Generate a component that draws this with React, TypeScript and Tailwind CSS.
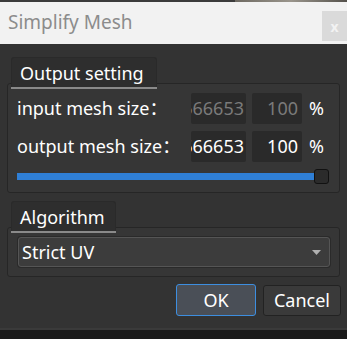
import React from 'react';

const font = { fontFamily: '"Segoe UI", "Noto Sans", "Noto Sans CJK SC", "Open Sans", sans-serif' };

function Tab({ label, width }: { label: string; width: string }) {
  return (
    <div
      className={`relative z-10 ml-[4px] h-[32px] ${width} rounded-t-[3px] border border-b-0 border-[#2a2a2a] bg-[#2e2e2e] flex flex-col`}
    >
      <div className="flex-1 flex items-center pl-[8px] text-[18px] leading-none text-white">{label}</div>
      <div className="h-[2px] bg-[#8a8a8a] -mx-px" />
    </div>
  );
}

function SizeRow({ label, count, pct, disabled }: { label: string; count: string; pct: string; disabled?: boolean }) {
  const tone = disabled ? 'text-[#7a7a7a]' : 'text-white';
  return (
    <div className="flex items-center h-[31px]">
      <span className="flex-1 text-[18px] text-white whitespace-nowrap">{label}</span>
      <div className={`w-[55px] h-[31px] bg-[#2a2a2a] rounded-[2px] overflow-hidden flex items-center justify-end pr-[2px] text-[18px] ${tone}`}>
        <span className="whitespace-nowrap">{count}</span>
      </div>
      <div className={`ml-[6px] w-[50px] h-[31px] bg-[#2a2a2a] rounded-[2px] flex items-center justify-end pr-[4px] text-[18px] ${tone}`}>
        {pct}
      </div>
      <span className="ml-[7px] w-[20px] text-[18px] text-white">%</span>
    </div>
  );
}

export default function App() {
  return (
    <div className="w-[347px] h-[339px] flex flex-col bg-[#1b1b1b] overflow-hidden" style={font}>
      {/* window strip above dialog */}
      <div className="h-[2px] flex">
        <div className="flex-1 bg-[#3b3b3b]" />
        <div className="w-[112px] bg-gradient-to-r from-[#6e6a62] via-[#9a958c] to-[#55524c]" />
      </div>

      {/* title bar */}
      <div className="h-[42px] bg-[#f2f2f2] flex justify-between">
        <span className="pl-[8px] pt-[6px] text-[19px] text-[#8c8c8c]">Simplify Mesh</span>
        <div className="mt-[9px] w-[25px] h-[30px] bg-[#dadada] flex items-center justify-center text-[14px] font-bold text-[#f2f2f2]">
          x
        </div>
      </div>

      {/* body */}
      <div className="h-[284px] bg-[#333333] px-[7px] pt-[13px] flex flex-col">
        <Tab label="Output setting" width="w-[146px]" />
        <div className="-mt-[6px] h-[110px] border border-[#262626] rounded-[3px] bg-[#363636] pl-[9px] pr-[10px] pt-[9px] flex flex-col gap-[7px]">
          <SizeRow label="input mesh size：" count="666653" pct="100" disabled />
          <SizeRow label="output mesh size：" count="666653" pct="100" />
          <div className="flex items-center h-[15px]">
            <div className="w-[300px] h-[7px] bg-[#2f7fd6]" />
            <div className="w-[15px] h-[15px] rounded-[3px] bg-[#2b2b2b] border border-[#111]" />
          </div>
        </div>

        <div className="mt-[8px]">
          <Tab label="Algorithm" width="w-[105px]" />
        </div>
        <div className="-mt-[6px] h-[50px] border border-[#262626] rounded-[3px] bg-[#363636] pl-[10px] pr-[9px] pt-[9px]">
          <div className="h-[30px] rounded-[3px] border border-[#555555] bg-[#3c3c3c] flex items-center justify-between pl-[3px] pr-[8px] shadow-[0_0_0_1px_#2a2a2a]">
            <span className="text-[18px] text-white">Strict UV</span>
            <svg width="9" height="5" viewBox="0 0 9 5">
              <path d="M0 0 H9 L4.5 5 Z" fill="#b0b0b0" />
            </svg>
          </div>
        </div>

        <div className="mt-[7px] flex justify-end gap-[7px] -mr-px">
          <button className="w-[80px] h-[32px] rounded-[3px] border border-[#3d8ee0] bg-[#4a4f57] text-[18px] text-white">
            OK
          </button>
          <button className="w-[78px] h-[31px] mt-px rounded-[3px] border border-[#222] bg-[#3a3a3a] text-[18px] text-white">
            Cancel
          </button>
        </div>
      </div>
      <div className="h-[2px] bg-[#3a3a3a]" />
    </div>
  );
}
